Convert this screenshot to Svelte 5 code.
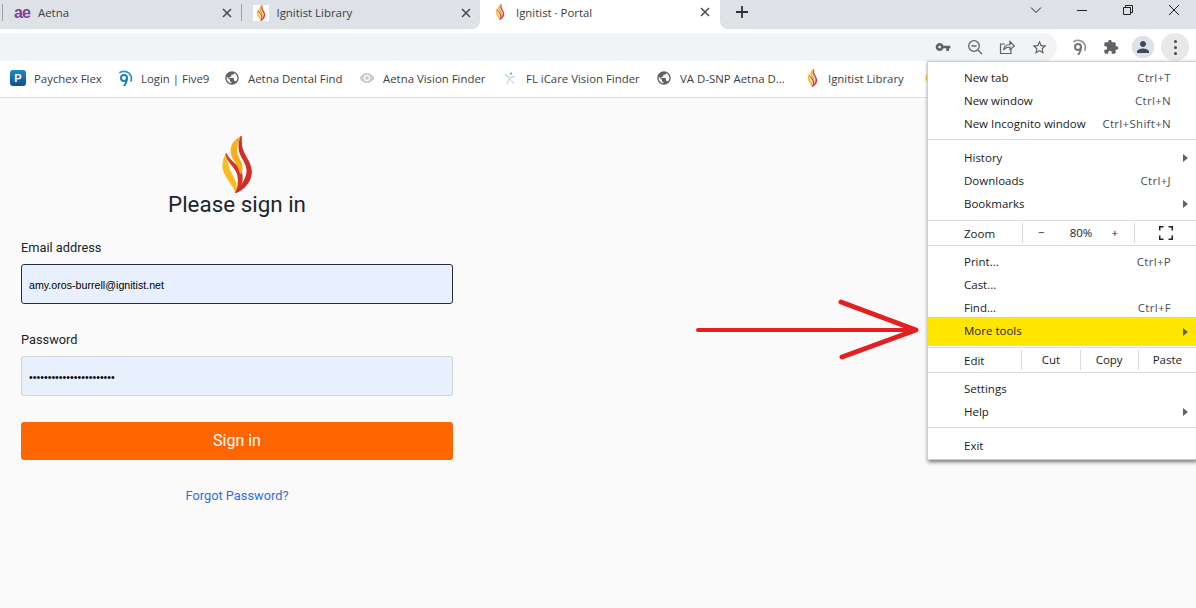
<script>
  const bookmarks = [
    { icon: 'paychex', label: 'Paychex Flex' },
    { icon: 'five9', label: 'Login | Five9' },
    { icon: 'globe', label: 'Aetna Dental Find' },
    { icon: 'eye', label: 'Aetna Vision Finder' },
    { icon: 'figure', label: 'FL iCare Vision Finder' },
    { icon: 'globe', label: 'VA D-SNP Aetna D...' },
    { icon: 'flame', label: 'Ignitist Library' },
    { icon: 'flame', label: '' }
  ];

  const groupOne = [
    { label: 'New tab', keys: 'Ctrl+T' },
    { label: 'New window', keys: 'Ctrl+N' },
    { label: 'New Incognito window', keys: 'Ctrl+Shift+N' }
  ];
  const groupTwo = [
    { label: 'History', more: true },
    { label: 'Downloads', keys: 'Ctrl+J' },
    { label: 'Bookmarks', more: true }
  ];
  const groupThree = [
    { label: 'Print...', keys: 'Ctrl+P' },
    { label: 'Cast...' },
    { label: 'Find...', keys: 'Ctrl+F' }
  ];
  const groupFour = [
    { label: 'Settings' },
    { label: 'Help', more: true }
  ];
</script>

{#snippet flame()}
  <svg class="flame" viewBox="-2 -2 89 171" stroke-width="4" stroke-linejoin="round">
    <path fill="#fbbd1e" stroke="#fbbd1e" d="M10 52C1 68-1 85 2 98C8 125 30 140 40 167C42 150 36 130 27 115C18 100 12 80 10 52Z" />
    <path fill="#d2352a" stroke="#d2352a" d="M10 52C14 75 30 85 40 102C50 118 50 145 40 167C56 150 62 125 54 104C46 84 22 78 10 52Z" />
    <path fill="#fbae17" stroke="#fbae17" d="M55 0C34 12 22 30 26 50C30 72 48 82 54 110C62 92 56 78 48 66C38 50 36 25 55 0Z" />
    <path fill="#cf2e28" stroke="#cf2e28" d="M55 0C46 22 46 42 58 62C70 80 76 95 72 112C68 135 52 150 40 167C62 158 85 135 85 105C85 80 66 62 58 38C55 26 54 12 55 0Z" />
  </svg>
{/snippet}

{#snippet five9(color, ring)}
  <svg class="ico" viewBox="0 0 16 16" fill="none">
    <circle cx="7" cy="8" r="3" stroke={color} stroke-width="2" />
    <path d="M10 8c0 3-1 5.500-2.500 7.500" stroke={color} stroke-width="2" stroke-linecap="round" />
    <path d="M3 2.500C6 .5 12 1 14 6c.6 1.800.4 3.500 0 5" stroke={ring} stroke-width="1.800" stroke-linecap="round" />
  </svg>
{/snippet}

{#snippet bookmarkIcon(name)}
  {#if name === 'paychex'}
    <span class="paychex">P</span>
  {:else if name === 'five9'}
    {@render five9('#1c7fb8', '#2a9ad6')}
  {:else if name === 'globe'}
    <svg class="ico" viewBox="0 0 24 24" fill="#5f6368"><path d="M12 2C6.480 2 2 6.480 2 12s4.480 10 10 10 10-4.480 10-10S17.520 2 12 2zm-1 17.930c-3.950-.49-7-3.850-7-7.930 0-.62.08-1.210.21-1.790L9 15v1c0 1.100.9 2 2 2v1.930zm6.900-2.540c-.26-.81-1-1.390-1.900-1.390h-1v-3c0-.55-.45-1-1-1H8v-2h2c.55 0 1-.45 1-1V7h2c1.100 0 2-.9 2-2v-.41c2.930 1.190 5 4.060 5 7.410 0 2.080-.8 3.970-2.100 5.390z" /></svg>
  {:else if name === 'eye'}
    <svg class="ico" viewBox="0 0 24 24" fill="#c9cbcc"><path d="M12 4.500C7 4.500 2.730 7.610 1 12c1.730 4.390 6 7.500 11 7.500s9.270-3.110 11-7.500c-1.730-4.390-6-7.500-11-7.500zM12 17c-2.760 0-5-2.240-5-5s2.240-5 5-5 5 2.240 5 5-2.240 5-5 5zm0-8c-1.660 0-3 1.340-3 3s1.340 3 3 3 3-1.340 3-3-1.340-3-3-3z" /></svg>
  {:else if name === 'figure'}
    <svg class="ico" viewBox="0 0 16 16" fill="none" stroke-linecap="round">
      <circle cx="9" cy="3.500" r="1.100" fill="#6aa8a8" />
      <path d="M3 4.500l4.500 3.500 5-1.500" stroke="#a4d0d6" stroke-width="1.100" />
      <path d="M7.500 8.500L5 13.500M8 9l4 4.500" stroke="#b5d8dc" stroke-width="1.100" />
    </svg>
  {:else}
    <span class="bm-flame">{@render flame()}</span>
  {/if}
{/snippet}

<div class="chrome">
  <div class="tabstrip">
    <div class="tabs-left">
      <div class="tab">
        <span class="ae">ae</span>
        <span class="tab-title">Aetna</span>
        <svg class="tab-x" viewBox="0 0 10 10"><path d="M1 1l8 8M9 1l-8 8" /></svg>
      </div>
      <div class="tab second">
        <span class="fav-box">{@render flame()}</span>
        <span class="tab-title">Ignitist Library</span>
        <svg class="tab-x" viewBox="0 0 10 10"><path d="M1 1l8 8M9 1l-8 8" /></svg>
      </div>
    </div>
    <div class="tab active">
      <span class="fav-bare">{@render flame()}</span>
      <span class="tab-title">Ignitist · Portal</span>
      <svg class="tab-x" viewBox="0 0 10 10"><path d="M1 1l8 8M9 1l-8 8" /></svg>
    </div>
    <div class="tabs-right">
      <svg class="plus" viewBox="0 0 12 12"><path d="M6 0v12M0 6h12" /></svg>
      <div class="winctl">
        <svg viewBox="0 0 12 12"><path d="M1 3.500l5 5 5-5" /></svg>
        <svg viewBox="0 0 12 12"><path d="M1 6.500h10" /></svg>
        <svg viewBox="0 0 12 12"><path d="M1.500 3.500h7v7h-7zM3.500 3.500v-2h7v7h-2" /></svg>
        <svg viewBox="0 0 12 12"><path d="M1 1l10 10M11 1L1 11" /></svg>
      </div>
    </div>
  </div>

  <div class="toolbar">
    <div class="omnibox">
      <svg class="tool" viewBox="0 0 24 24" fill="#5f6368"><path d="M12.650 10C11.830 7.670 9.610 6 7 6c-3.310 0-6 2.690-6 6s2.690 6 6 6c2.610 0 4.830-1.670 5.650-4H17v4h4v-4h2v-4H12.650zM7 14c-1.100 0-2-.9-2-2s.9-2 2-2 2 .9 2 2-.9 2-2 2z" /></svg>
      <svg class="tool" viewBox="0 0 16 16" fill="none" stroke="#5f6368" stroke-width="1.300"><circle cx="7" cy="7" r="5.300" /><path d="M4.500 7h5M11 11l4 4" /></svg>
      <svg class="tool" viewBox="0 0 16 16" fill="none" stroke="#5f6368" stroke-width="1.200"><path d="M6 5H1.500v9.500h10.500V10" /><path d="M4.500 11c.5-3.500 3-5.500 6.500-5.500V2.500L15.500 7 11 10.500V8c-2.500 0-5 1-6.500 3z" /></svg>
      <svg class="tool star" viewBox="0 0 24 24" fill="#5f6368"><path d="M22 9.240l-7.190-.62L12 2 9.190 8.630 2 9.240l5.460 4.730L5.820 21 12 17.270 18.180 21l-1.630-7.030L22 9.240zM12 15.400l-3.760 2.270 1-4.280-3.320-2.880 4.380-.38L12 6.100l1.710 4.040 4.380.38-3.320 2.880 1 4.280L12 15.400z" /></svg>
    </div>
    <div class="actions">
      <span class="act">{@render five9('#777', '#9a9a9a')}</span>
      <span class="act"><svg class="ico" viewBox="0 0 24 24" fill="#5f6368"><path d="M20.500 11H19V7c0-1.100-.9-2-2-2h-4V3.500C13 2.120 11.880 1 10.500 1S8 2.120 8 3.500V5H4c-1.100 0-1.990.9-1.990 2v3.800H3.500c1.490 0 2.700 1.210 2.700 2.700s-1.210 2.700-2.700 2.700H2V20c0 1.100.9 2 2 2h3.800v-1.500c0-1.490 1.210-2.700 2.700-2.700 1.490 0 2.700 1.210 2.700 2.700V22H17c1.100 0 2-.9 2-2v-4h1.500c1.380 0 2.500-1.120 2.500-2.500S21.880 11 20.500 11z" /></svg></span>
      <span class="act avatar"><svg class="ico" viewBox="0 0 24 24" fill="#3c4a5e"><path d="M12 12c2.210 0 4-1.790 4-4s-1.790-4-4-4-4 1.790-4 4 1.790 4 4 4zm0 2c-2.670 0-8 1.340-8 4v2h16v-2c0-2.660-5.330-4-8-4z" /></svg></span>
      <span class="act kebab"><i></i><i></i><i></i></span>
    </div>
  </div>

  <div class="bookmarks">
    {#each bookmarks as b}
      <div class="bm">
        {@render bookmarkIcon(b.icon)}
        <span>{b.label}</span>
      </div>
    {/each}
  </div>
</div>

<main class="page">
  <form class="signin">
    <div class="logo">{@render flame()}</div>
    <h1>Please sign in</h1>

    <label class="field">
      <span>Email address</span>
      <input class="focused" type="text" value="amy.oros-burrell@ignitist.net" />
    </label>
    <label class="field pass">
      <span>Password</span>
      <input type="password" value="abcdefghijklmnopqrstuvw" />
    </label>

    <button type="button">Sign in</button>
    <a href="#forgot">Forgot Password?</a>
  </form>
</main>

{#snippet row(item)}
  <div class="row">
    <span>{item.label}</span>
    {#if item.keys}<span class="keys">{item.keys}</span>{/if}
    {#if item.more}<i class="caret"></i>{/if}
  </div>
{/snippet}

<div class="menu">
  <div class="group g1">
    {#each groupOne as item}{@render row(item)}{/each}
  </div>
  <div class="group g2">
    {#each groupTwo as item}{@render row(item)}{/each}
  </div>
  <div class="split zoom">
    <span class="split-label">Zoom</span>
    <div class="stepper">
      <span>−</span>
      <span class="pct">80%</span>
      <span>+</span>
    </div>
    <div class="full">
      <svg viewBox="0 0 14 14"><path d="M0.500 4.500V0.500h4M9.500 0.500h4v4M13.500 9.500v4h-4M4.500 13.500h-4v-4" /></svg>
    </div>
  </div>
  <div class="group g3">
    {#each groupThree as item}{@render row(item)}{/each}
    <div class="row hilite">
      <span>More tools</span>
      <i class="caret"></i>
    </div>
  </div>
  <div class="split edit">
    <span class="split-label">Edit</span>
    <span class="cell">Cut</span>
    <span class="cell">Copy</span>
    <span class="cell">Paste</span>
  </div>
  <div class="group g5">
    {#each groupFour as item}{@render row(item)}{/each}
  </div>
  <div class="group g6">
    {@render row({ label: 'Exit' })}
  </div>
</div>

<svg class="callout" viewBox="0 0 240 70" fill="none" stroke="#e41f1f" stroke-linecap="round" stroke-linejoin="round">
  <path d="M18 40h216" stroke-width="4" />
  <path d="M161 12l75 28-74 27" stroke-width="5" />
</svg>

<style>
  :global(body) {
    margin: 0;
    background: #fafafa;
    overflow: hidden;
  }

  .chrome {
    font-family: 'Open Sans', sans-serif;
    font-size: 11.4px;
    color: #3c4043;
    background: #fff;
  }

  .tabstrip {
    display: flex;
    height: 29px;
    background: #fff;
  }

  .tabs-left {
    display: flex;
    width: 480px;
    background: #dee1e6;
    border-bottom-right-radius: 8px;
  }

  .tabs-right {
    flex: 1;
    display: flex;
    align-items: center;
    justify-content: space-between;
    background: #dee1e6;
    border-bottom-left-radius: 8px;
    padding-left: 16px;
  }

  .tab {
    width: 240px;
    box-sizing: border-box;
    display: flex;
    align-items: center;
    height: 17px;
    margin-top: 4px;
    border-left: 1px solid #9aa0a6;
  }

  .tab:first-child {
    width: 239px;
    margin-left: 2px;
    padding: 0 9px 0 11px;
  }

  .tab.second {
    padding: 0 9px 0 11px;
  }

  .tab.active {
    background: #fff;
    height: 33px;
    margin-top: 0;
    border-left: 0;
    padding: 0 10px 9px 15px;
  }

  .tab-title {
    flex: 1;
    margin-left: 8px;
    white-space: nowrap;
  }

  .active .tab-title {
    margin-left: 11px;
  }

  .tab-x {
    width: 10px;
    height: 10px;
    fill: none;
    stroke: #45494d;
    stroke-width: 1.500;
  }

  .ae {
    width: 16px;
    font-family: 'Liberation Sans', sans-serif;
    font-weight: 700;
    font-size: 16px;
    line-height: 16px;
    letter-spacing: -0.8px;
    color: #7d3f98;
  }

  .fav-box {
    width: 16px;
    height: 16px;
    background: #fff;
    display: flex;
    justify-content: center;
  }

  .fav-box .flame,
  .fav-bare .flame {
    height: 16px;
    width: 10px;
  }

  .fav-bare {
    width: 10px;
    display: flex;
    justify-content: center;
  }

  .flame {
    display: block;
  }

  .plus {
    width: 12px;
    height: 12px;
    fill: none;
    stroke: #303336;
    stroke-width: 1.800;
    margin-bottom: 5px;
  }

  .winctl {
    display: flex;
    gap: 34px;
    padding-right: 16px;
    margin-bottom: 10px;
  }

  .winctl svg {
    width: 12px;
    height: 12px;
    fill: none;
    stroke: #222;
    stroke-width: 1;
  }

  .toolbar {
    display: flex;
    height: 28px;
    margin-top: 4px;
    background: #fff;
  }

  .omnibox {
    width: 1057px;
    box-sizing: border-box;
    background: #f1f3f4;
    border-radius: 0 14px 14px 0;
    display: flex;
    align-items: center;
    justify-content: flex-end;
    gap: 16px;
    padding-right: 9px;
  }

  .tool {
    width: 16px;
    height: 16px;
  }

  .star {
    width: 17px;
    height: 17px;
  }

  .actions {
    flex: 1;
    display: flex;
    align-items: center;
    justify-content: flex-end;
    gap: 4px;
    padding-right: 7px;
  }

  .act {
    width: 28px;
    height: 28px;
    display: flex;
    align-items: center;
    justify-content: center;
    border-radius: 50%;
  }

  .avatar svg {
    width: 18px;
    height: 18px;
  }

  .avatar {
    background: radial-gradient(circle, #dee1e6 11px, #fff 11.500px);
  }

  .kebab {
    background: #e8e8e8;
    flex-direction: column;
    gap: 3px;
  }

  .kebab i {
    width: 3px;
    height: 3px;
    border-radius: 50%;
    background: #45494d;
  }

  .ico {
    width: 16px;
    height: 16px;
    display: block;
    flex: none;
  }

  .bookmarks {
    height: 37px;
    box-sizing: border-box;
    border-bottom: 1px solid #dadce0;
    display: grid;
    grid-template-columns: 107px 107px 135px 143px 154px 148px 118px 30px;
    align-items: center;
    padding-left: 10px;
    overflow: hidden;
  }

  .bm {
    display: flex;
    align-items: center;
    gap: 8px;
    white-space: nowrap;
    padding-bottom: 2px;
  }

  .paychex {
    width: 16px;
    height: 16px;
    border-radius: 3px;
    background: linear-gradient(#1f86c9, #114f93);
    color: #fff;
    font: 700 11px/16px 'Liberation Sans', sans-serif;
    text-align: center;
  }

  .bm-flame {
    width: 16px;
    display: flex;
    justify-content: center;
  }

  .bm-flame .flame {
    width: 11px;
    height: 18px;
  }

  .page {
    font-family: Roboto, sans-serif;
    color: #212529;
  }

  .signin {
    width: 432px;
    margin-left: 21px;
    padding-top: 38px;
    display: flex;
    flex-direction: column;
  }

  .logo {
    align-self: center;
  }

  .logo .flame {
    width: 30px;
    height: 57px;
  }

  h1 {
    margin: -2px 0 0;
    font-size: 22.4px;
    line-height: 26px;
    font-weight: 400;
    text-align: center;
  }

  .field {
    display: flex;
    flex-direction: column;
    font-size: 12.8px;
    line-height: 16px;
    margin-top: 23px;
    gap: 8px;
  }

  .field.pass {
    margin-top: 28px;
  }

  input {
    height: 40px;
    box-sizing: border-box;
    border: 1px solid #ced4da;
    border-radius: 3px;
    background: #e8f0fe;
    padding: 1px 7px 0;
    font-family: 'Liberation Sans', sans-serif;
    font-size: 10.670px;
    color: #000;
    outline: none;
  }

  input.focused {
    border-color: #2b2f33;
  }

  button {
    height: 38px;
    margin-top: 26px;
    padding: 0 0 2px;
    border: 0;
    border-radius: 3px;
    background: #ff6600;
    color: #fff;
    font-family: Roboto, sans-serif;
    font-size: 16px;
  }

  a {
    margin-top: 28px;
    align-self: center;
    font-size: 12.8px;
    line-height: 16px;
    color: #2f6fde;
    text-decoration: none;
  }

  .menu {
    position: absolute;
    left: 927px;
    top: 61px;
    width: 269px;
    box-sizing: border-box;
    background: #fff;
    border: 1px solid #cfcfcf;
    border-right: 0;
    box-shadow: 1px 2px 4px rgba(0, 0, 0, 0.55);
    font-family: 'Open Sans', sans-serif;
    font-size: 11.500px;
    color: #202124;
  }

  .group + .group,
  .split,
  .split + .group {
    border-top: 1px solid #dadce0;
  }

  .g1 { padding: 4px 0 4px; }
  .g2 { padding: 6px 0 5px; }
  .g3 { padding: 4px 0 1px; }
  .g5 { padding: 4px 0 4px; }
  .g6 { padding: 6px 0 2px; }

  .row {
    position: relative;
    height: 23px;
    display: flex;
    align-items: center;
    justify-content: space-between;
    padding: 0 25px 0 36px;
  }

  .keys {
    color: #4a4f54;
    letter-spacing: 0.3px;
  }

  .hilite {
    height: 27px;
    margin-top: -2px;
    padding-bottom: 2px;
    background: #ffe600;
  }

  .caret {
    position: absolute;
    right: 8px;
    top: 50%;
    margin-top: -4px;
    border-left: 5px solid #5f6368;
    border-top: 4px solid transparent;
    border-bottom: 4px solid transparent;
  }

  .split {
    height: 24px;
    display: flex;
    align-items: stretch;
    line-height: 24px;
  }

  .split-label {
    width: 58px;
    padding: 1px 0 0 36px;
  }

  .stepper {
    width: 112px;
    box-sizing: border-box;
    display: flex;
    justify-content: space-between;
    padding: 0 16px 0 15px;
    border-left: 1px solid #dadce0;
    margin: 2px 0;
    line-height: 20px;
  }

  .pct {
    margin-left: 6px;
  }

  .full {
    flex: 1;
    display: flex;
    align-items: center;
    justify-content: center;
    border-left: 1px solid #dadce0;
    margin: 2px 0;
  }

  .full svg {
    width: 14px;
    height: 14px;
    fill: none;
    stroke: #202124;
    stroke-width: 2;
  }

  .cell {
    width: 58px;
    text-align: center;
    border-left: 1px solid #dadce0;
    margin: 2px 0;
    line-height: 20px;
  }

  .callout {
    position: absolute;
    left: 680px;
    top: 290px;
    width: 240px;
    height: 70px;
  }
</style>
